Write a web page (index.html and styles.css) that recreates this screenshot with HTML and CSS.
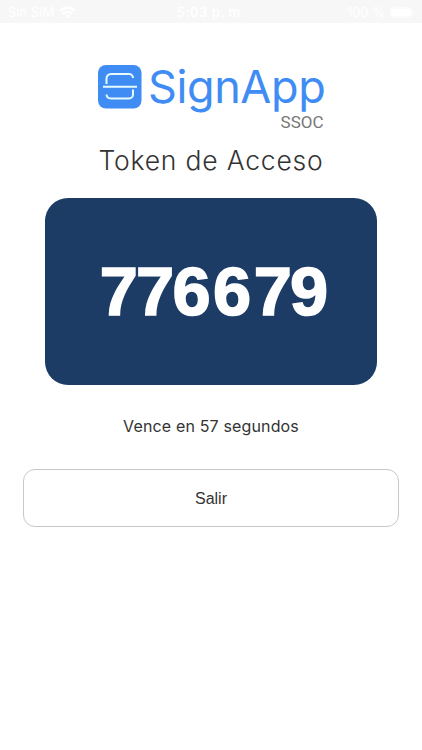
FILE: index.html
```html
<!DOCTYPE html>
<html lang="es">
<head>
  <meta charset="UTF-8">
  <meta name="viewport" content="width=device-width, initial-scale=1.0">
  <title>SignApp</title>
  <link rel="stylesheet" href="styles.css">
</head>
<body>
  <header class="status_bar">
    <div class="carrier">
      <span>Sin SIM</span>
      <svg width="17" height="13" viewBox="0 0 17 13" fill="none" stroke="#fff" stroke-width="2.4">
        <path d="M1 4.800a10.700 10.700 0 0 1 15 0M3.800 7.800a6.700 6.700 0 0 1 9.400 0"/>
        <path d="M8.500 12.500 5.900 9.900a3.700 3.700 0 0 1 5.200 0z" fill="#fff" stroke="none"/>
      </svg>
    </div>
    <div class="time">5:03 p. m.</div>
    <div class="battery">
      <span>100 %</span>
      <svg width="24" height="11" viewBox="0 0 24 11">
        <rect x="0.5" y="0.5" width="21" height="10" rx="2.5" fill="none" stroke="#fbfbfb"/>
        <rect x="1" y="1.5" width="20" height="8" rx="1.5" fill="#fff"/>
        <path d="M23 4v3" stroke="#fff"/>
      </svg>
    </div>
  </header>
  <main class="content">
    <div class="logo">
      <svg class="logo_icon" width="44" height="44" viewBox="0 0 44 44">
        <rect width="43.5" height="43.5" rx="8" fill="#3f8cf4"/>
        <g fill="none" stroke="#e6fbff" stroke-width="2">
          <path d="M8.500 19v-5.500a4.500 4.500 0 0 1 4.500-4.500h18a4 4 0 0 1 4 4"/>
          <path d="M5 21.700h34"/>
          <path d="M35 24.500v5a4 4 0 0 1-4 4h-18a4.500 4.500 0 0 1-4.500-4"/>
        </g>
      </svg>
      <span class="logo_name">SignApp</span>
    </div>
    <div class="logo_sub">SSOC</div>
    <h1 class="title">Token de Acceso</h1>
    <div class="token"><span class="narrow">77</span><span class="wide">66</span><span class="narrow">7</span>9</div>
    <p class="expires">Vence en 57 segundos</p>
    <button class="exit" type="button">Salir</button>
  </main>
</body>
</html>
```

FILE: styles.css
```css
*{
  margin: 0;
  padding: 0;
  box-sizing: border-box;
}

body{
  background: #fff;
  color: #333;
  font-family: Inter, sans-serif;
}

.status_bar{
  display: grid;
  grid-template-columns: 1fr auto 1fr;
  align-items: center;
  height: 23px;
  padding: 1px 8px 0;
  background: #f7f7f7;
  color: #fff;
  font-size: 13px;
  line-height: 22px;
}
.carrier,
.battery{
  display: flex;
  align-items: center;
  gap: 5px;
}
.battery{
  justify-content: flex-end;
}
.time{
  font-weight: 600;
  letter-spacing: 0.5px;
}

.content{
  display: flex;
  flex-direction: column;
  align-items: center;
  padding: 42px 23px 0;
}
.logo{
  display: flex;
  width: 226px;
  height: 46px;
}
.logo_icon{
  flex: none;
}
.logo_name{
  margin-left: 6px;
  color: #3f8cf4;
  font-size: 45px;
  line-height: 44px;
  letter-spacing: -0.4px;
  white-space: nowrap;
}
.logo_sub{
  width: 225px;
  height: 22px;
  color: #777;
  font-family: Roboto, sans-serif;
  font-size: 17px;
  line-height: 22px;
  text-align: right;
}
.title{
  height: 54px;
  font-size: 26.5px;
  font-weight: 300;
  line-height: 54px;
  letter-spacing: 0.8px;
  white-space: nowrap;
}
.token{
  width: 332px;
  height: 187px;
  margin-top: 11px;
  padding-left: 6px;
  border-radius: 23px;
  background: #1c3c66;
  color: #fff;
  font-family: "Liberation Sans", sans-serif;
  font-size: 68.5px;
  font-weight: 700;
  line-height: 187px;
  text-align: center;
  -webkit-text-stroke: 1.6px #fff;
}
.narrow{
  letter-spacing: -1.8px;
}
.wide{
  letter-spacing: 2.6px;
}
.expires{
  margin-top: 30px;
  font-size: 16px;
  line-height: 22px;
  letter-spacing: 0.15px;
}
.exit{
  width: 376px;
  height: 58px;
  margin-top: 32px;
  padding-top: 2px;
  border: 1px solid #c8c8c8;
  border-radius: 12px;
  background: #fff;
  color: #333;
  font-family: "Liberation Sans", sans-serif;
  font-size: 16px;
}
```
